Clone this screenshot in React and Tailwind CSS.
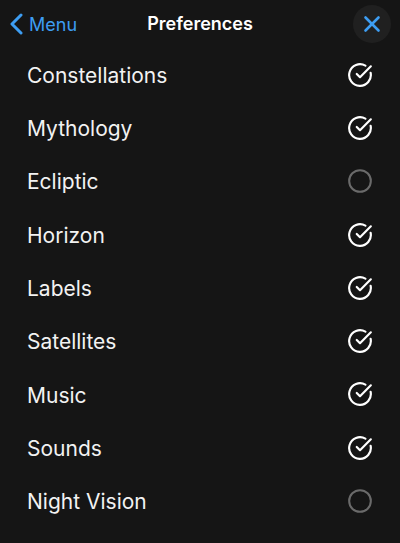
import { useState } from 'react';
import { X, CircleCheckBig, Circle } from 'lucide-react';

const initial = [
  ['Constellations', true],
  ['Mythology', true],
  ['Ecliptic', false],
  ['Horizon', true],
  ['Labels', true],
  ['Satellites', true],
  ['Music', true],
  ['Sounds', true],
  ['Night Vision', false],
];

export default function App() {
  const [prefs, setPrefs] = useState(initial);

  const toggle = (i) => {
    setPrefs((p) => p.map((row, j) => (j === i ? [row[0], !row[1]] : row)));
  };

  return (
    <div
      className="w-[400px] h-[543px] bg-[#151515] text-white overflow-hidden"
      style={{ fontFamily: 'Inter, "Liberation Sans", sans-serif' }}
    >
      <div className="relative h-[47px] flex items-center">
        <button className="flex items-center pl-[9px] text-[#3d9df2] mt-[1px]">
          <svg width="14" height="22" viewBox="0 0 14 22" fill="none">
            <path d="M12 2 L3 11 L12 20" stroke="currentColor" strokeWidth="3" strokeLinecap="round" strokeLinejoin="round" />
          </svg>
          <span className="text-[18px] ml-[6px]">Menu</span>
        </button>
        <div className="absolute left-0 right-0 text-center text-[18px] font-semibold pointer-events-none">
          Preferences
        </div>
        <button className="ml-auto mr-[9px] w-[38px] h-[38px] rounded-full bg-[#202020] flex items-center justify-center text-[#3d9df2]">
          <X size={26} strokeWidth={2.4} />
        </button>
      </div>

      <div className="flex flex-col pt-[2px]">
        {prefs.map(([label, on], i) => (
          <button
            key={label}
            onClick={() => toggle(i)}
            className="h-[53.3px] flex items-center justify-between pl-[27px] pr-[27px] text-left"
          >
            <span className="text-[21px] text-[#f2f2f2]">{label}</span>
            <span className="-mt-[2px]">
              {on ? (
                <CircleCheckBig size={26} strokeWidth={2} className="text-white" />
              ) : (
                <Circle size={26} strokeWidth={1.9} className="text-[#6a6a6a]" />
              )}
            </span>
          </button>
        ))}
      </div>
    </div>
  );
}
